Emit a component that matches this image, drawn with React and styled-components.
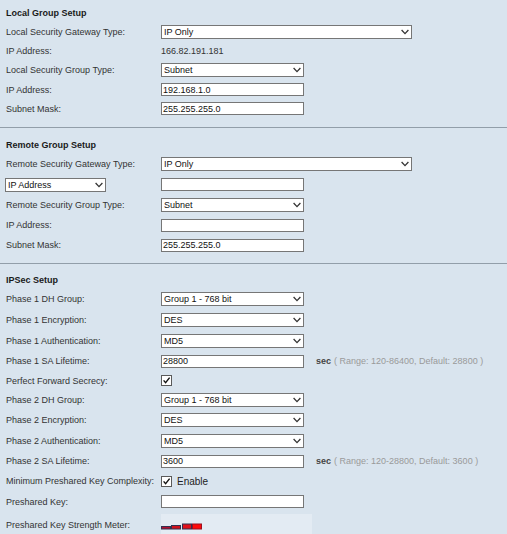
import React from "react";
import styled, { createGlobalStyle } from "styled-components";

const GlobalStyle = createGlobalStyle`
  html, body {
    margin: 0;
    padding: 0;
    overflow: hidden;
    background: #d9e4ee;
  }
  body {
    font-family: "Liberation Sans", Arial, sans-serif;
    font-size: 9px;
    color: #333;
  }
`;

const Page = styled.div`
  width: 507px;
  height: 534px;
  background: #d9e4ee;
`;

const Section = styled.section`
  padding: ${(p) => p.$top ?? 7}px 0 ${(p) => p.$bottom ?? 8}px 6px;
`;

const Divider = styled.div`
  height: 1px;
  background: #929ea9;
`;

const Heading = styled.div`
  height: ${(p) => p.$h ?? 19}px;
  display: flex;
  align-items: center;
  font-weight: bold;
  color: #1a1a1a;
`;

const Row = styled.div`
  display: grid;
  grid-template-columns: 155px auto;
  align-items: center;
  height: ${(p) => p.$h ?? 20}px;
`;

const Label = styled.div`
  white-space: nowrap;
  color: #333;
`;

const Cell = styled.div`
  display: flex;
  align-items: center;
  white-space: nowrap;
`;

const SelectWrap = styled.div`
  position: relative;
  width: ${(p) => p.$w ?? 143}px;
  height: 14px;
  margin-left: ${(p) => p.$shift ?? 0}px;
`;

const NativeSelect = styled.select`
  appearance: none;
  box-sizing: border-box;
  width: 100%;
  height: 100%;
  margin: 0;
  padding: 0 12px 0 2px;
  border: 1px solid #767676;
  border-radius: 0;
  background: #fff;
  font-family: "Liberation Sans", Arial, sans-serif;
  font-size: 9px;
  color: #111;
  outline: none;
`;

const Chevron = styled.svg`
  position: absolute;
  right: 3px;
  top: 4px;
  pointer-events: none;
`;

const TextInput = styled.input`
  box-sizing: border-box;
  width: ${(p) => p.$w ?? 143}px;
  height: 13px;
  margin: 0;
  padding: 0 1px;
  border: 1px solid #767676;
  border-radius: 0;
  background: #fff;
  font-family: "Liberation Sans", Arial, sans-serif;
  font-size: 9px;
  color: #111;
  outline: none;
`;

const Value = styled.span`
  color: #333;
`;

const Sec = styled.span`
  margin-left: 12px;
  font-weight: bold;
  color: #444;
`;

const Range = styled.span`
  margin-left: 3px;
  color: #9a9a9a;
`;

const Box = styled.span`
  box-sizing: border-box;
  display: inline-flex;
  width: 11px;
  height: 11px;
  border: 1px solid #5a5a5a;
  background: #fff;
`;

const CheckText = styled.span`
  margin-left: 5px;
  font-size: 10px;
  color: #222;
`;

const MeterPanel = styled.div`
  align-self: start;
  margin-top: 2px;
  width: 151px;
  height: 24px;
  padding-top: 8px;
  box-sizing: border-box;
  background: #e3ebf3;
`;

const Select = ({ value, w, shift }) => (
  <SelectWrap $w={w} $shift={shift}>
    <NativeSelect defaultValue={value}>
      <option>{value}</option>
    </NativeSelect>
    <Chevron width="8" height="6" viewBox="0 0 8 6">
      <path d="M0.6 1 L4 4.6 L7.4 1" fill="none" stroke="#333" strokeWidth="1.3" />
    </Chevron>
  </SelectWrap>
);

const Check = ({ children }) => (
  <Cell>
    <Box>
      <svg width="9" height="9" viewBox="0 0 9 9">
        <path d="M1.6 4.4 L3.6 6.6 L7.6 1.6" fill="none" stroke="#111" strokeWidth="1.4" />
      </svg>
    </Box>
    {children && <CheckText>{children}</CheckText>}
  </Cell>
);

const Meter = () => (
  <svg width="42" height="7" viewBox="0 0 42 7">
    <rect x="0.5" y="3.5" width="9" height="2.5" fill="#b01030" stroke="#34304e" />
    <rect x="10.5" y="2.5" width="9" height="3.5" fill="#d0101c" stroke="#34304e" />
    <rect x="21.5" y="1" width="9" height="5" fill="#e0101a" stroke="#34304e" />
    <rect x="31.5" y="1" width="9" height="5" fill="#ff0a0a" stroke="#9a1020" />
  </svg>
);

export default function App() {
  return (
    <Page>
      <GlobalStyle />

      <Section $top={3} $bottom={9}>
        <Heading>Local Group Setup</Heading>
        <Row $h={19}>
          <Label>Local Security Gateway Type:</Label>
          <Cell><Select value="IP Only" w={251} /></Cell>
        </Row>
        <Row $h={19}>
          <Label>IP Address:</Label>
          <Cell><Value>166.82.191.181</Value></Cell>
        </Row>
        <Row $h={20}>
          <Label>Local Security Group Type:</Label>
          <Cell><Select value="Subnet" /></Cell>
        </Row>
        <Row $h={19}>
          <Label>IP Address:</Label>
          <Cell><TextInput defaultValue="192.168.1.0" /></Cell>
        </Row>
        <Row $h={19}>
          <Label>Subnet Mask:</Label>
          <Cell><TextInput defaultValue="255.255.255.0" /></Cell>
        </Row>
      </Section>
      <Divider />

      <Section>
        <Heading>Remote Group Setup</Heading>
        <Row $h={20}>
          <Label>Remote Security Gateway Type:</Label>
          <Cell><Select value="IP Only" w={251} /></Cell>
        </Row>
        <Row $h={21}>
          <Cell><Select value="IP Address" w={101} shift={-1} /></Cell>
          <Cell><TextInput /></Cell>
        </Row>
        <Row $h={20}>
          <Label>Remote Security Group Type:</Label>
          <Cell><Select value="Subnet" /></Cell>
        </Row>
        <Row $h={20}>
          <Label>IP Address:</Label>
          <Cell><TextInput /></Cell>
        </Row>
        <Row $h={20}>
          <Label>Subnet Mask:</Label>
          <Cell><TextInput defaultValue="255.255.255.0" /></Cell>
        </Row>
      </Section>
      <Divider />

      <Section $bottom={0}>
        <Heading $h={18}>IPSec Setup</Heading>
        <Row $h={20}>
          <Label>Phase 1 DH Group:</Label>
          <Cell><Select value="Group 1 - 768 bit" /></Cell>
        </Row>
        <Row $h={21}>
          <Label>Phase 1 Encryption:</Label>
          <Cell><Select value="DES" /></Cell>
        </Row>
        <Row $h={21}>
          <Label>Phase 1 Authentication:</Label>
          <Cell><Select value="MD5" /></Cell>
        </Row>
        <Row $h={20}>
          <Label>Phase 1 SA Lifetime:</Label>
          <Cell>
            <TextInput defaultValue="28800" />
            <Sec>sec</Sec>
            <Range>( Range: 120-86400, Default: 28800 )</Range>
          </Cell>
        </Row>
        <Row $h={19}>
          <Label>Perfect Forward Secrecy:</Label>
          <Check />
        </Row>
        <Row $h={20}>
          <Label>Phase 2 DH Group:</Label>
          <Cell><Select value="Group 1 - 768 bit" /></Cell>
        </Row>
        <Row $h={20}>
          <Label>Phase 2 Encryption:</Label>
          <Cell><Select value="DES" /></Cell>
        </Row>
        <Row $h={21}>
          <Label>Phase 2 Authentication:</Label>
          <Cell><Select value="MD5" /></Cell>
        </Row>
        <Row $h={20}>
          <Label>Phase 2 SA Lifetime:</Label>
          <Cell>
            <TextInput defaultValue="3600" />
            <Sec>sec</Sec>
            <Range>( Range: 120-28800, Default: 3600 )</Range>
          </Cell>
        </Row>
        <Row $h={20}>
          <Label>Minimum Preshared Key Complexity:</Label>
          <Check>Enable</Check>
        </Row>
        <Row $h={21}>
          <Label>Preshared Key:</Label>
          <Cell><TextInput /></Cell>
        </Row>
        <Row $h={22}>
          <Label>Preshared Key Strength Meter:</Label>
          <MeterPanel><Meter /></MeterPanel>
        </Row>
      </Section>
    </Page>
  );
}
